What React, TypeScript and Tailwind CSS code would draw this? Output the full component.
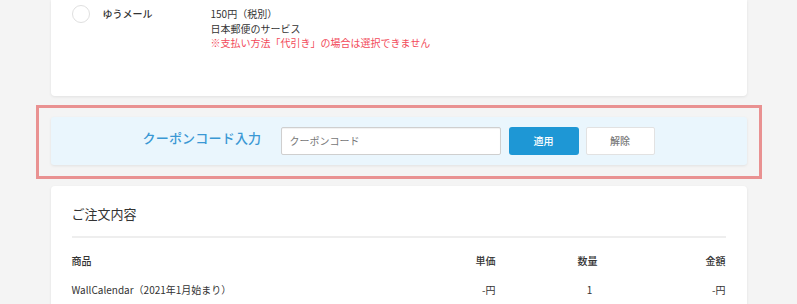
import React from 'react';

const items = [
  { name: 'WallCalendar（2021年1月始まり）', price: '-円', qty: '1', amount: '-円' },
];

export default function App() {
  return (
    <div className="min-h-[304px] w-full overflow-hidden bg-[#f4f4f4] font-['Noto_Sans_CJK_JP','Noto_Sans',sans-serif] text-[#333]">
      <div className="mx-auto flex w-[696px] flex-col">
        {/* 配送方法カード（下端のみ表示） */}
        <div className="rounded-b-[4px] bg-white px-[21px] pb-[45px] pt-[5px] shadow-[0_1px_3px_rgba(0,0,0,0.08)]">
          <div className="flex items-start">
            <span className="h-[18px] w-[18px] shrink-0 rounded-full border border-[#e0e0e0] bg-white" />
            <div className="ml-[13px] w-[108px] pt-[2px] text-[10px] font-medium leading-[14px] text-[#333]">
              ゆうメール
            </div>
            <div className="pt-[2px] text-[10px] leading-[14.5px]">
              <p>150円（税別）</p>
              <p>日本郵便のサービス</p>
              <p className="text-[#f24a5a]">※支払い方法「代引き」の場合は選択できません</p>
            </div>
          </div>
        </div>

        {/* クーポン入力（強調枠） */}
        <div className="-mx-[15px] mt-[9px] border-[3px] border-[#e99191] px-[12px] pb-[11px] pt-[9px]">
          <div className="flex h-[48px] items-center rounded-[3px] bg-[#eaf6fd] pl-[92px] shadow-[0_1px_3px_rgba(0,0,0,0.08)]">
            <span className="-mt-[6px] w-[138px] text-[13px] font-medium tracking-[0.2px] text-[#3a98d4]">
              クーポンコード入力
            </span>
            <input
              type="text"
              placeholder="クーポンコード"
              className="h-[28px] w-[220px] rounded-[2px] border border-[#cfcfcf] bg-white px-[8px] text-[10px] text-[#333] shadow-[inset_0_1px_1px_rgba(0,0,0,0.06)] outline-none placeholder:text-[#777]"
            />
            <button className="ml-[8px] h-[28px] w-[70px] rounded-[3px] bg-[#1e97d5] text-[10px] font-medium text-white">
              適用
            </button>
            <button className="ml-[7px] h-[28px] w-[69px] rounded-[2px] border border-[#e2e2e2] bg-white text-[10px] font-medium text-[#777]">
              解除
            </button>
          </div>
        </div>

        {/* ご注文内容 */}
        <div className="mt-[7px] rounded-t-[4px] bg-white px-[21px] pt-[19px] shadow-[0_1px_3px_rgba(0,0,0,0.08)]">
          <h2 className="text-[13px] leading-[18px] text-[#333]">ご注文内容</h2>
          <div className="mt-[13px] h-[2px] bg-[#eeeeee]" />
          <div className="mt-[16px] grid grid-cols-[1fr_60px_180px_50px] text-[10px] font-medium leading-[14px]">
            <span>商品</span>
            <span className="text-right">単価</span>
            <span className="pl-[4px] text-center">数量</span>
            <span className="text-right">金額</span>
          </div>
          {items.map((item) => (
            <div
              key={item.name}
              className="mt-[15px] grid grid-cols-[1fr_60px_180px_50px] pb-[20px] text-[10px] leading-[14px]"
            >
              <span>{item.name}</span>
              <span className="text-right">{item.price}</span>
              <span className="pl-[8px] text-center">{item.qty}</span>
              <span className="text-right">{item.amount}</span>
            </div>
          ))}
        </div>
      </div>
    </div>
  );
}
